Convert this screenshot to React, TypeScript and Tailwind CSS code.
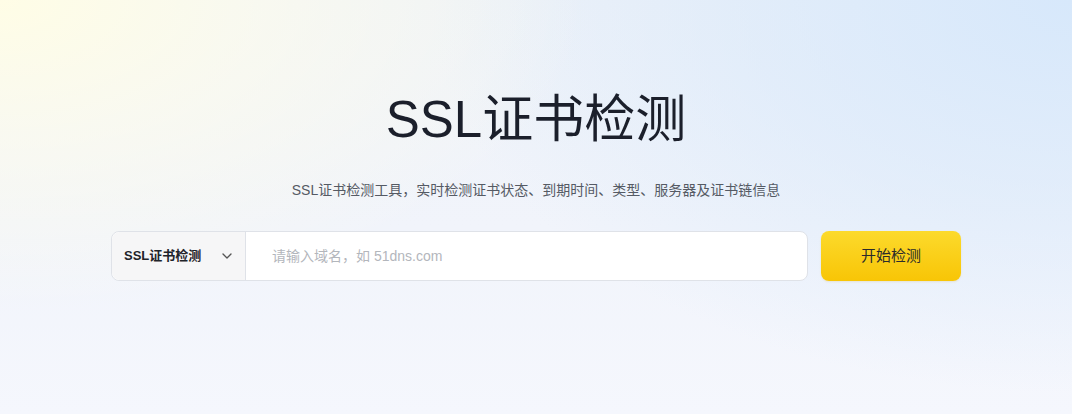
import { ChevronDown } from 'lucide-react';

export default function App() {
  return (
    <div
      className="relative h-[414px] w-full overflow-hidden bg-[radial-gradient(ellipse_55%_75%_at_0%_0%,#fffde6_0%,rgba(255,253,235,0.6)_45%,rgba(255,253,235,0)_100%),radial-gradient(ellipse_60%_95%_at_100%_0%,#d7e8fb_0%,rgba(215,232,251,0.55)_50%,rgba(215,232,251,0)_100%),linear-gradient(to_bottom,#eef2f8_0%,#f1f4fb_55%,#f5f7fd_100%)]"
      style={{ fontFamily: '"Liberation Sans", "Noto Sans CJK SC", sans-serif' }}
    >
      <div className="flex flex-col items-center pt-[92px]">
        <h1 className="text-[51px] leading-[56px] font-normal text-[#1b1f2b]">
          SSL证书检测
        </h1>
        <p className="mt-[32px] text-[14px] leading-[20px] text-[#555a64]">
          SSL证书检测工具，实时检测证书状态、到期时间、类型、服务器及证书链信息
        </p>

        <div className="mt-[31px] flex w-[850px] items-center gap-[13px]">
          <div className="flex h-[50px] flex-1 rounded-[8px] border border-[#dfe2e8] bg-white">
            <button className="flex w-[134px] shrink-0 items-center justify-between rounded-l-[8px] border-r border-[#dfe2e8] bg-[#f6f6f7] pl-[12px] pr-[10px] text-[13px] font-bold text-[#1f2329]">
              SSL证书检测
              <ChevronDown className="h-4 w-4 text-[#555]" strokeWidth={2} />
            </button>
            <input
              className="min-w-0 flex-1 rounded-r-[8px] bg-transparent px-[26px] text-[14px] text-[#333] outline-none placeholder:text-[#b3b6bc]"
              placeholder="请输入域名，如 51dns.com"
            />
          </div>
          <button className="h-[50px] w-[140px] rounded-[8px] bg-[linear-gradient(to_bottom,#fcda2c,#f8c506)] text-[15px] text-[#2b2b2b] shadow-[0_1px_2px_rgba(200,150,0,0.15)]">
            开始检测
          </button>
        </div>
      </div>
    </div>
  );
}
